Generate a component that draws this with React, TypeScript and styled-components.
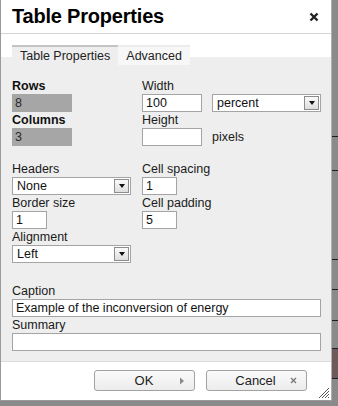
import React from 'react'
import styled, {createGlobalStyle} from 'styled-components'

const GlobalStyle = createGlobalStyle`
  html, body {
    margin: 0;
    padding: 0;
    background: #8a8a8a;
  }
  body {
    font-family: 'Liberation Sans', Arial, sans-serif;
    color: #111;
  }
`

const Page = styled.div`
  width: 338px;
  height: 406px;
  display: flex;
  overflow: hidden;
`

const Dialog = styled.div`
  width: 332px;
  height: 401px;
  box-sizing: border-box;
  background: #fff;
  border-left: 1px solid #9a9a9a;
  border-right: 1px solid #b0b0b0;
  border-bottom: 1px solid #9a9a9a;
  display: flex;
  flex-direction: column;
`

const TitleBar = styled.div`
  height: 34px;
  flex: none;
  box-sizing: border-box;
  border-bottom: 1px solid #d4d4d4;
  padding: 0 12px 0 11px;
  display: flex;
  align-items: center;
  justify-content: space-between;
`

const Title = styled.h1`
  margin: 0;
  font-size: 20px;
  font-weight: bold;
  letter-spacing: -0.2px;
  color: #000;
`

const CloseButton = styled.span`
  display: flex;
  width: 10px;
  height: 10px;
`

const TabBar = styled.div`
  height: 23px;
  flex: none;
  box-sizing: border-box;
  padding: 11px 0 0 11px;
  display: flex;
`

const Tab = styled.div<{$active?: boolean}>`
  position: relative;
  z-index: 1;
  height: 20px;
  box-sizing: border-box;
  padding: 0 8px;
  line-height: 19px;
  font-size: 12.5px;
  color: #222;
  background: ${p => (p.$active ? '#eeeeee' : '#f7f7f7')};
  border-top: 2px solid ${p => (p.$active ? '#c4c4c4' : '#ececec')};
`

const Panel = styled.div`
  flex: 1;
  background: #eeeeee;
  border-bottom: 1px solid #dcdcdc;
  padding: 21px 0 0 11px;
  box-sizing: border-box;
`

const Columns = styled.div<{$top?: number}>`
  display: grid;
  grid-template-columns: 130px 1fr;
  margin-top: ${p => p.$top || 0}px;
`

const Stack = styled.div`
  display: flex;
  flex-direction: column;
`

const Label = styled.div<{$bold?: boolean}>`
  height: 16px;
  line-height: 16px;
  font-size: 12.5px;
  font-weight: ${p => (p.$bold ? 'bold' : 'normal')};
  color: ${p => (p.$bold ? '#111' : '#1a1a1a')};
`

const Line = styled.div`
  display: flex;
  align-items: center;
  gap: 10px;
`

const TextBox = styled.input<{$w: number}>`
  width: ${p => p.$w}px;
  height: 18px;
  box-sizing: border-box;
  border: 1px solid #a4a4a4;
  background: #fff;
  padding: 0 3px;
  margin: 0;
  font-family: 'Liberation Sans', Arial, sans-serif;
  font-size: 12.5px;
  color: #111;
  outline: none;
`

const LockedBox = styled.div`
  width: 60px;
  height: 18px;
  box-sizing: border-box;
  background: #a6a6a6;
  padding: 0 3px;
  line-height: 18px;
  font-size: 12.5px;
  color: #2a2a2a;
`

const SelectBox = styled.div<{$w: number}>`
  width: ${p => p.$w}px;
  height: 18px;
  box-sizing: border-box;
  border: 1px solid #a4a4a4;
  background: #fff;
  display: flex;
  align-items: center;
  justify-content: space-between;
  padding: 0 1px 0 4px;
  font-size: 12.5px;
  color: #111;
`

const DropButton = styled.span`
  width: 15px;
  height: 14px;
  box-sizing: border-box;
  border: 1px solid #8c8c8c;
  background: linear-gradient(#fafafa, #dedede);
  display: flex;
  align-items: center;
  justify-content: center;
`

const Unit = styled.span`
  font-size: 12.5px;
  color: #1a1a1a;
`

const Footer = styled.div`
  height: 38px;
  flex: none;
  display: flex;
  align-items: flex-start;
  justify-content: flex-end;
  gap: 11px;
  padding: 8px 24px 0 0;
  box-sizing: border-box;
  position: relative;
`

const Button = styled.button<{$w: number}>`
  width: ${p => p.$w}px;
  height: 21px;
  box-sizing: border-box;
  border: 1px solid #a2a2a2;
  border-radius: 3px;
  background: linear-gradient(#fafafa, #ececec);
  font-family: 'Liberation Sans', Arial, sans-serif;
  font-size: 13px;
  color: #222;
  padding: 0 9px 0 0;
  display: grid;
  grid-template-columns: 1fr auto;
  align-items: center;
  margin: 0;
`

const ButtonText = styled.span`
  text-align: center;
  padding-left: 14px;
`

const Grip = styled.svg`
  position: absolute;
  right: 1px;
  bottom: 1px;
`

const Backdrop = styled.div`
  flex: 1;
  display: flex;
  flex-direction: column;
`

const BackdropCell = styled.div<{$h: number; $dark?: boolean}>`
  height: ${p => p.$h}px;
  flex: none;
  box-sizing: border-box;
  border-bottom: 1px solid #1e1e1e;
  background: ${p => (p.$dark ? '#6e5a5a' : '#8a8a8a')};
`

const Arrow = () => (
    <svg width="10" height="6" viewBox="0 0 10 6">
        <path d="M2 1 L8 1 L5 5 Z" fill="#111"/>
    </svg>
)

const Select = ({value, width}: {value: string; width: number}) => (
    <SelectBox $w={width}>
        <span>{value}</span>
        <DropButton><Arrow/></DropButton>
    </SelectBox>
)

const App = () => {
    return (
        <>
            <GlobalStyle/>
            <Page>
                <Dialog>
                    <TitleBar>
                        <Title>Table Properties</Title>
                        <CloseButton>
                            <svg width="10" height="10" viewBox="0 0 10 10">
                                <path d="M1.5 1.5 L8.5 8.5 M8.5 1.5 L1.5 8.5" stroke="#222" strokeWidth="2.4"/>
                            </svg>
                        </CloseButton>
                    </TitleBar>
                    <TabBar>
                        <Tab $active>Table Properties</Tab>
                        <Tab>Advanced</Tab>
                    </TabBar>
                    <Panel>
                        <Columns>
                            <Stack>
                                <Label $bold>Rows</Label>
                                <LockedBox>8</LockedBox>
                                <Label $bold>Columns</Label>
                                <LockedBox>3</LockedBox>
                            </Stack>
                            <Stack>
                                <Label>Width</Label>
                                <Line>
                                    <TextBox $w={60} defaultValue="100"/>
                                    <Select value="percent" width={109}/>
                                </Line>
                                <Label>Height</Label>
                                <Line>
                                    <TextBox $w={60} defaultValue=""/>
                                    <Unit>pixels</Unit>
                                </Line>
                            </Stack>
                        </Columns>
                        <Columns $top={15}>
                            <Stack>
                                <Label>Headers</Label>
                                <Select value="None" width={119}/>
                                <Label>Border size</Label>
                                <TextBox $w={35} defaultValue="1"/>
                                <Label>Alignment</Label>
                                <Select value="Left" width={119}/>
                            </Stack>
                            <Stack>
                                <Label>Cell spacing</Label>
                                <TextBox $w={35} defaultValue="1"/>
                                <Label>Cell padding</Label>
                                <TextBox $w={35} defaultValue="5"/>
                            </Stack>
                        </Columns>
                        <Stack style={{marginTop: 20}}>
                            <Label>Caption</Label>
                            <TextBox $w={309} defaultValue="Example of the inconversion of energy"/>
                            <Label>Summary</Label>
                            <TextBox $w={309} defaultValue=""/>
                        </Stack>
                    </Panel>
                    <Footer>
                        <Button $w={101}>
                            <ButtonText>OK</ButtonText>
                            <svg width="6" height="8" viewBox="0 0 6 8">
                                <path d="M1 0.5 L5 4 L1 7.5 Z" fill="#8a8a8a"/>
                            </svg>
                        </Button>
                        <Button $w={101}>
                            <ButtonText>Cancel</ButtonText>
                            <svg width="7" height="7" viewBox="0 0 7 7">
                                <path d="M1 1 L6 6 M6 1 L1 6" stroke="#777" strokeWidth="1.3"/>
                            </svg>
                        </Button>
                        <Grip width="12" height="12" viewBox="0 0 12 12">
                            <path d="M1 11 L11 1 M4 11 L11 4 M7 11 L11 7 M10 11 L11 10" stroke="#555" strokeWidth="1"/>
                        </Grip>
                    </Footer>
                </Dialog>
                <Backdrop>
                    <BackdropCell $h={137}/>
                    <BackdropCell $h={34}/>
                    <BackdropCell $h={89}/>
                    <BackdropCell $h={30}/>
                    <BackdropCell $h={31}/>
                    <BackdropCell $h={28}/>
                    <BackdropCell $h={30} $dark/>
                </Backdrop>
            </Page>
        </>
    )
}

export default App
